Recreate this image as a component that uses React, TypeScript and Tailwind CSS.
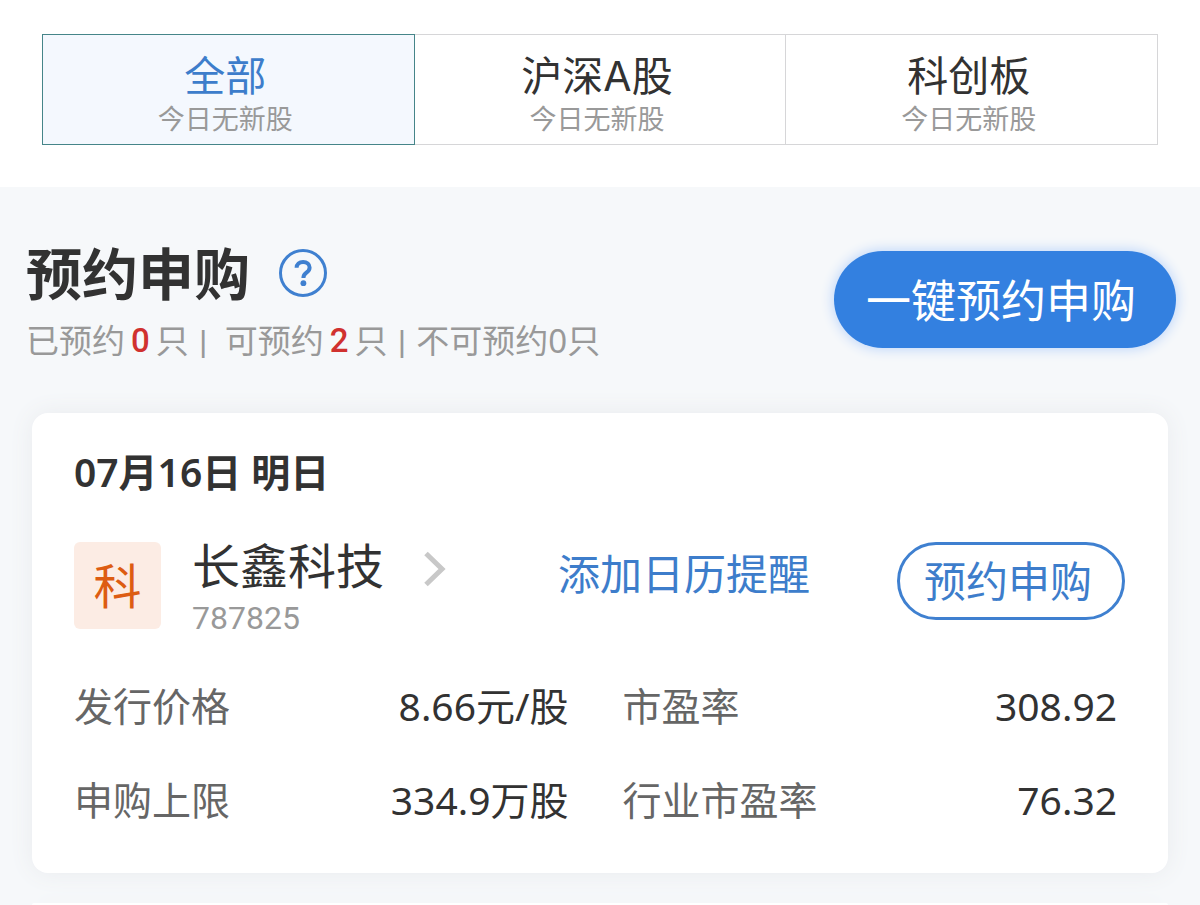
import { useState } from 'react';
import { clsx } from 'clsx';

const TABS = [
  { id: 'all', label: '全部', hint: '今日无新股' },
  { id: 'main', label: '沪深A股', hint: '今日无新股' },
  { id: 'star', label: '科创板', hint: '今日无新股' },
];

const DETAILS = [
  { label: '发行价格', value: '8.66元/股' },
  { label: '市盈率', value: '308.92' },
  { label: '申购上限', value: '334.9万股' },
  { label: '行业市盈率', value: '76.32' },
];

export default function App() {
  const [tab, setTab] = useState('all');

  return (
    <div className="flex min-h-screen flex-col bg-[#f6f8fa] font-['Noto_Sans','Noto_Sans_CJK_SC',sans-serif] text-[#323232]">
      <header className="bg-white px-[42px] pt-[34px] pb-[42px]">
        <div role="tablist" className="flex">
          {TABS.map((t) => (
            <button
              key={t.id}
              type="button"
              role="tab"
              aria-selected={t.id === tab}
              onClick={() => setTab(t.id)}
              className={clsx(
                'flex flex-1 flex-col items-center border pt-[15px] pr-[6px] pb-2',
                t.id === tab
                  ? 'border-[#458589] bg-[#f4f8fe]'
                  : 'border-l-0 border-[#d6d6d8]',
              )}
            >
              <span
                className={clsx(
                  "font-['Inter','Noto_Sans_CJK_SC',sans-serif] text-[41px] leading-[52px]",
                  t.id === tab && 'text-[#3d7dcb]',
                )}
              >
                {t.label}
              </span>
              <span className="text-[27px] leading-[34px] text-[#999]">{t.hint}</span>
            </button>
          ))}
        </div>
      </header>

      <section className="flex items-start justify-between pt-[54px] pr-6 pb-12 pl-[26px]">
        <div>
          <div className="flex items-center gap-[29px]">
            <h1 className="text-[56px] leading-[64px] font-semibold">预约申购</h1>
            <HelpButton />
          </div>
          <Summary />
        </div>
        <button
          type="button"
          className="mt-[10px] h-[97px] rounded-full bg-[#3380e0] pt-[2px] pr-10 pl-8 text-[45px] leading-[64px] text-white shadow-[0_0_12px_2px_#c3d9fa]"
        >
          一键预约申购
        </button>
      </section>

      <main className="flex flex-1 flex-col gap-[30px] px-8">
        <StockCard />
        <div className="flex-1 rounded-t-2xl bg-white shadow-[0_0_24px_#e9ebee]" />
      </main>
    </div>
  );
}

function HelpButton() {
  return (
    <button type="button" aria-label="预约申购说明" className="text-[#3f80d0]">
      <svg viewBox="0 0 48 48" className="size-12" fill="none" stroke="currentColor">
        <circle cx="24" cy="24" r="22.5" strokeWidth="3" />
        <path
          d="M17.6 18.8c0-3.6 2.8-5.9 6.5-5.9 3.8 0 6.5 2.2 6.5 5.5 0 2.6-1.3 3.9-3.2 5.3-2.1 1.5-3 2.5-3 5.3"
          strokeWidth="4"
        />
        <circle cx="24.4" cy="34.2" r="2.9" fill="currentColor" stroke="none" />
      </svg>
    </button>
  );
}

function Count({ children }: { children: number }) {
  return (
    <span className="mx-[6px] font-['Roboto',sans-serif] font-medium text-[#d0312f]">{children}</span>
  );
}

function Summary() {
  return (
    <p className="mt-3 flex text-[33px] leading-[48px] text-[#999]">
      <span>已预约</span>
      <Count>0</Count>
      <span>只</span>
      <span className="mr-[14px] ml-[7px] text-[27px] font-semibold">|</span>
      <span>可预约</span>
      <Count>2</Count>
      <span>只</span>
      <span className="mx-[7px] text-[27px] font-semibold">|</span>
      <span>不可预约0只</span>
    </p>
  );
}

function StockCard() {
  return (
    <article className="rounded-2xl bg-white pt-[33px] pr-[43px] pb-[46px] pl-[42px] shadow-[0_0_24px_#e9ebee]">
      <h2 className="text-[39px] leading-[52px] font-semibold">07月16日 明日</h2>

      <div className="mt-11 flex items-start">
        <span className="flex size-[87px] items-center justify-center rounded-md bg-[#fcece4] text-[48px] leading-[48px] text-[#dd5c12]">
          科
        </span>
        <a href="#stock" className="ml-[31px] flex items-start gap-10">
          <span>
            <span className="block text-[48px] leading-[48px]">长鑫科技</span>
            <span className="block font-['Roboto',sans-serif] text-[32px] leading-[56px] text-[#999]">787825</span>
          </span>
          <svg viewBox="0 0 22 36" className="mt-[9px] h-9 w-[22px]" fill="none" stroke="#c8c8c8" strokeWidth="5">
            <path d="M2 2.5 18 18 2 33.5" />
          </svg>
        </a>
        <a href="#remind" className="ml-auto pt-1 text-[42px] leading-[56px] text-[#3d7dcb]">
          添加日历提醒
        </a>
        <button
          type="button"
          className="ml-[87px] h-[78px] rounded-full border-3 border-[#3f80d0] pr-[30px] pl-6 text-[42px] leading-[56px] text-[#3d7dcb]"
        >
          预约申购
        </button>
      </div>

      <dl className="mt-[33px] grid grid-cols-2 gap-x-[54px] gap-y-10 pr-2 text-[39px] leading-[54px]">
        {DETAILS.map((d) => (
          <div key={d.label} className="flex justify-between">
            <dt className="text-[#666]">{d.label}</dt>
            <dd>{d.value}</dd>
          </div>
        ))}
      </dl>
    </article>
  );
}
